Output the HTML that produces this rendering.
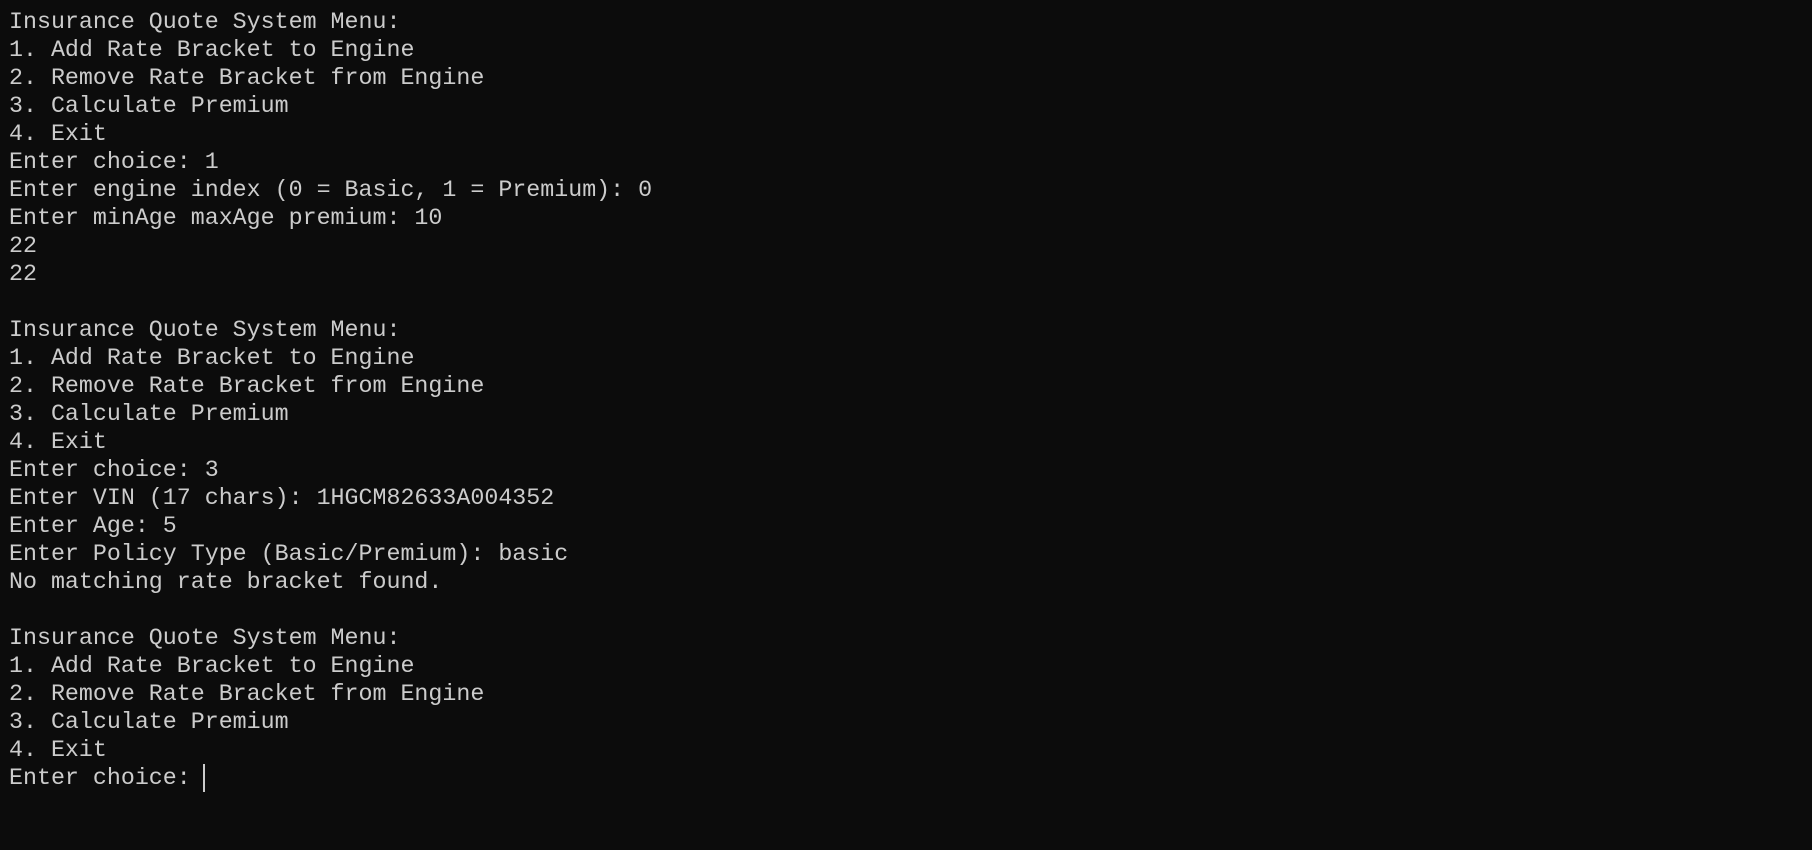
<!DOCTYPE html>
<html><head><meta charset="utf-8"><style>
html,body{margin:0;padding:0;background:#0c0c0c;width:1812px;height:850px;overflow:hidden}
pre{margin:0;padding:8px 0 0 9px;font-family:"Liberation Mono",monospace;font-size:23.3px;line-height:28px;color:#cccccc;white-space:pre}
.cur{display:inline-block;width:2px;height:28px;background:#cccccc;vertical-align:top;margin-left:-2px}
</style></head><body><pre>Insurance Quote System Menu:
1. Add Rate Bracket to Engine
2. Remove Rate Bracket from Engine
3. Calculate Premium
4. Exit
Enter choice: 1
Enter engine index (0 = Basic, 1 = Premium): 0
Enter minAge maxAge premium: 10
22
22

Insurance Quote System Menu:
1. Add Rate Bracket to Engine
2. Remove Rate Bracket from Engine
3. Calculate Premium
4. Exit
Enter choice: 3
Enter VIN (17 chars): 1HGCM82633A004352
Enter Age: 5
Enter Policy Type (Basic/Premium): basic
No matching rate bracket found.

Insurance Quote System Menu:
1. Add Rate Bracket to Engine
2. Remove Rate Bracket from Engine
3. Calculate Premium
4. Exit
Enter choice: <span class="cur"></span></pre></body></html>
